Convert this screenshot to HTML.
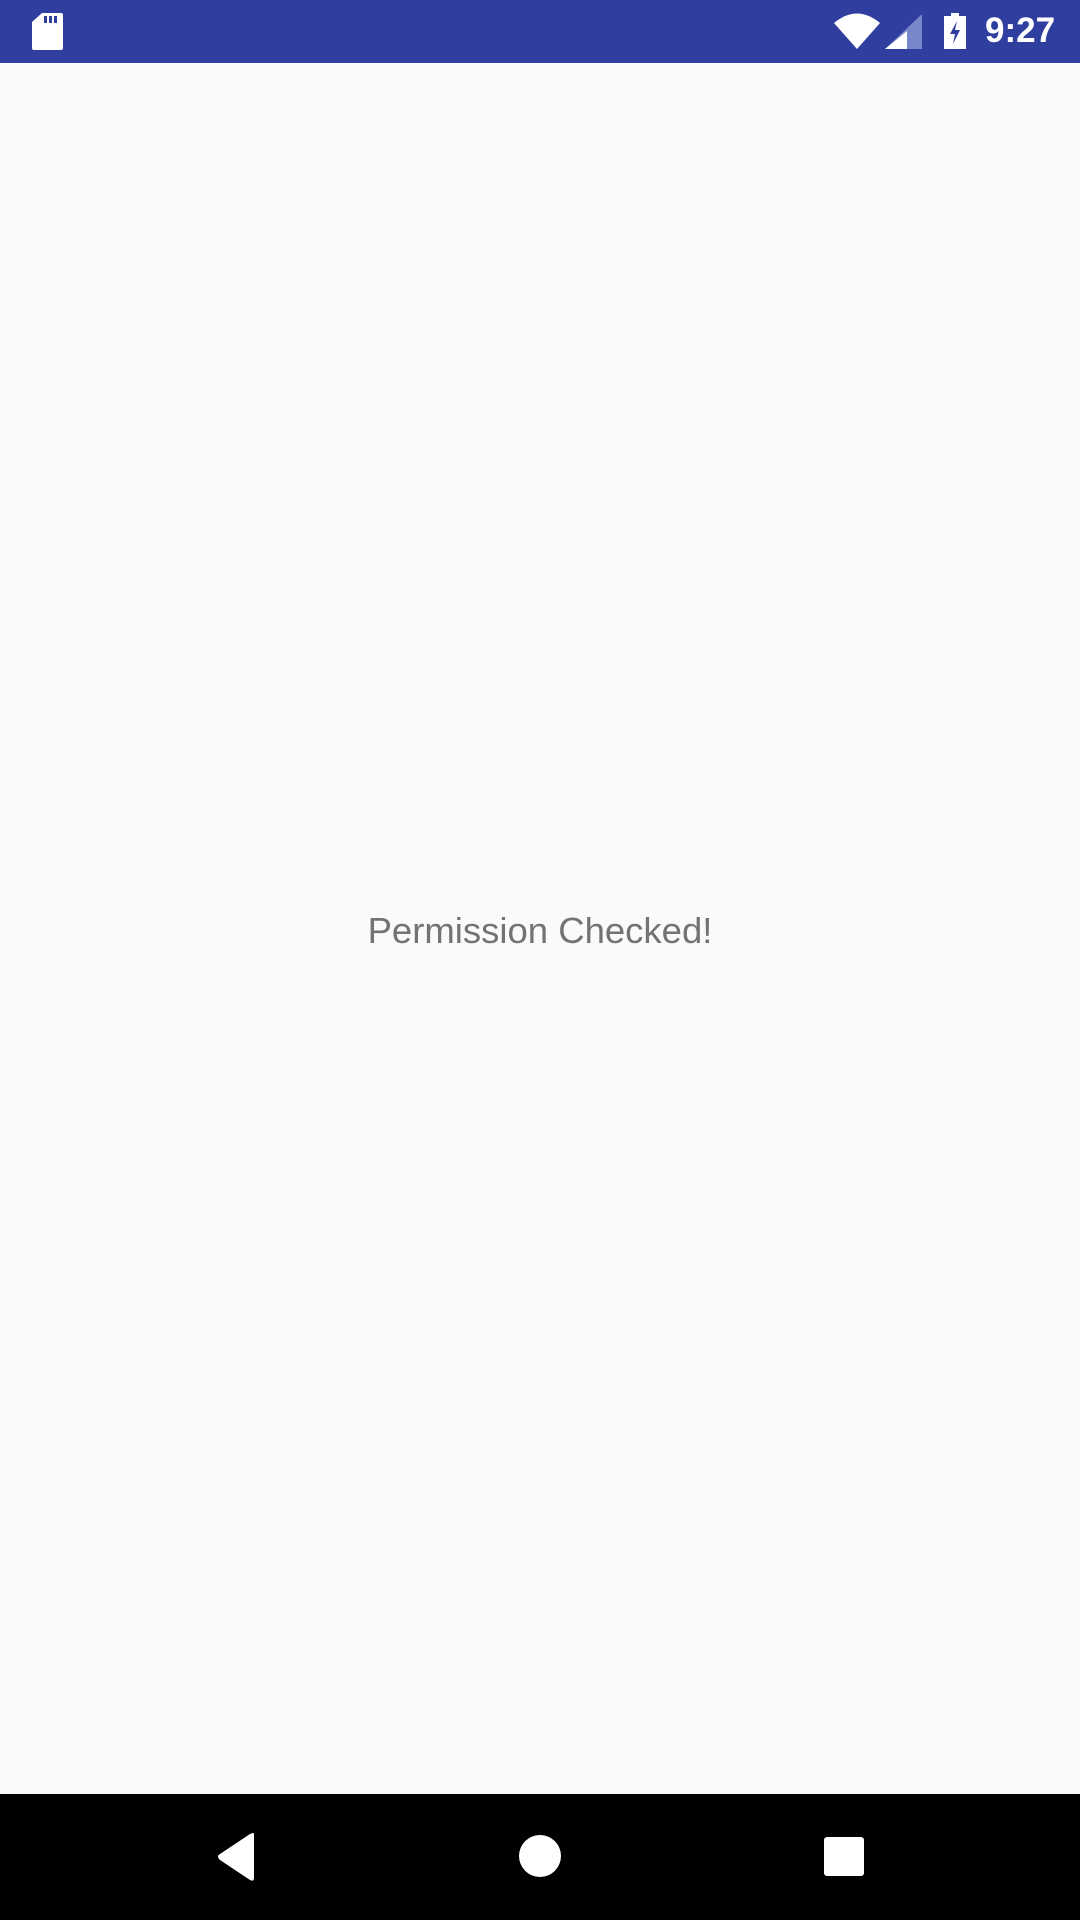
<!DOCTYPE html>
<html><head><style>
html,body{margin:0;padding:0;width:1080px;height:1920px;overflow:hidden;background:#fafafa;font-family:"Liberation Sans",sans-serif}
.sb{position:absolute;left:0;top:0;width:1080px;height:63px;background:#303f9f}
.nav{position:absolute;left:0;top:1794px;width:1080px;height:126px;background:#000}
.t{position:absolute;left:0;width:1080px;top:906px;text-align:center;font-size:36.5px;color:#737373;line-height:50px}
.time{position:absolute;left:985px;top:9px;font-size:35px;color:#fff;line-height:44px;font-weight:bold}
</style></head><body>
<div class="sb">
<svg width="1080" height="63" style="position:absolute;left:0;top:0">
<path d="M42 13 H61 Q63 13 63 15 V48 Q63 50 61 50 H34 Q32 50 32 48 V22 Z" fill="#fff"/>
<rect x="44" y="16" width="3" height="7" fill="#303f9f"/><rect x="49" y="16" width="3" height="7" fill="#303f9f"/><rect x="54" y="16" width="3" height="7" fill="#303f9f"/>
<path d="M834 23 Q857 4 880 23 L857 49 Z" fill="#fff"/>
<path d="M922 14 V49 H885 Z" fill="#7986cb"/>
<path d="M907 31 V49 H885 Z" fill="#fff"/>
<rect x="951" y="13" width="8" height="4" fill="#fff"/>
<rect x="944" y="16" width="22" height="33" fill="#fff"/>
<path d="M957 21 L950 34 H955 L953 44 L960 30 H955 Z" fill="#303f9f"/>
</svg>
<div class="time">9:27</div>
</div>
<div class="t">Permission Checked!</div>
<div class="nav">
<svg width="1080" height="126" style="position:absolute;left:0;top:0">
<path d="M254 40 V84 Q254 88 250 86 L220 66 Q216 62 220 60 L250 40 Q254 38 254 40 Z" fill="#fff"/>
<circle cx="540" cy="62" r="21" fill="#fff"/>
<rect x="824" y="43" width="40" height="39" rx="3" fill="#fff"/>
</svg>
</div>
</body></html>
